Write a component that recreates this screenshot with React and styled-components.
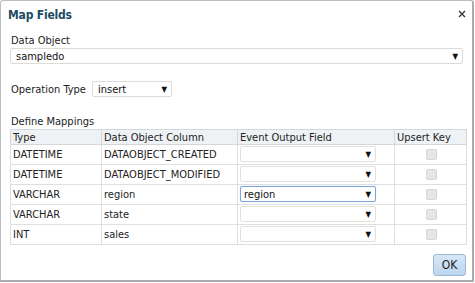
import React from "react";
import styled, { createGlobalStyle } from "styled-components";

const GlobalStyle = createGlobalStyle`
  html, body {
    margin: 0;
    padding: 0;
    background: #ffffff;
  }
  body {
    font-family: "DejaVu Sans Condensed", "DejaVu Sans", sans-serif;
    font-size: 11px;
    color: #222;
  }
`;

const mappings = [
  { type: "DATETIME", column: "DATAOBJECT_CREATED", field: "" },
  { type: "DATETIME", column: "DATAOBJECT_MODIFIED", field: "" },
  { type: "VARCHAR", column: "region", field: "region", focused: true },
  { type: "VARCHAR", column: "state", field: "" },
  { type: "INT", column: "sales", field: "" },
];

const App = () => {
  return (
    <>
      <GlobalStyle />
      <Dialog>
        <TitleBar>
          <Title>Map Fields</Title>
          <Close viewBox="0 0 8 8" width="8" height="8">
            <path d="M1 1 L7 7 M7 1 L1 7" stroke="#333" strokeWidth="1.3" />
          </Close>
        </TitleBar>
        <Body>
          <Label>Data Object</Label>
          <Select $width="453px">
            <span>sampledo</span>
            <Arrow>▼</Arrow>
          </Select>
          <OperationRow>
            <Label>Operation Type</Label>
            <Select $width="80px">
              <span>insert</span>
              <Arrow>▼</Arrow>
            </Select>
          </OperationRow>
          <SectionLabel>Define Mappings</SectionLabel>
          <Table>
            <colgroup>
              <col style={{ width: 91 }} />
              <col style={{ width: 136 }} />
              <col style={{ width: 157 }} />
              <col style={{ width: 72 }} />
            </colgroup>
            <thead>
              <tr>
                <Th>Type</Th>
                <Th>Data Object Column</Th>
                <Th>Event Output Field</Th>
                <Th>Upsert Key</Th>
              </tr>
            </thead>
            <tbody>
              {mappings.map((m) => (
                <tr key={m.column}>
                  <Td>{m.type}</Td>
                  <Td>{m.column}</Td>
                  <Td>
                    <CellSelect $focused={m.focused}>
                      <span>{m.field}</span>
                      <Arrow>▼</Arrow>
                    </CellSelect>
                  </Td>
                  <Td $center>
                    <Check />
                  </Td>
                </tr>
              ))}
            </tbody>
          </Table>
        </Body>
        <Footer>
          <OkButton>OK</OkButton>
        </Footer>
      </Dialog>
    </>
  );
};

export default App;

const Dialog = styled.div`
  width: 471px;
  height: 279px;
  border: 1px solid #b9bcc0;
  border-right: 2px solid #a9acb0;
  border-bottom: 2px solid #a9acb0;
  border-radius: 3px 3px 0 0;
  background: #fff;
  display: flex;
  flex-direction: column;
  box-sizing: content-box;
`;

const TitleBar = styled.div`
  height: 27px;
  display: flex;
  align-items: center;
  justify-content: space-between;
  padding: 0 6px 0 7px;
`;

const Title = styled.div`
  font-weight: bold;
  font-size: 12px;
  letter-spacing: -0.2px;
  color: #1d4b63;
`;

const Close = styled.svg`
  display: block;
  margin-top: -1px;
`;

const Body = styled.div`
  padding: 6px 0 0 9px;
  display: flex;
  flex-direction: column;
`;

const Label = styled.div`
  color: #222;
  line-height: 13px;
  margin-left: 1px;
`;

const Select = styled.div`
  width: ${(p) => p.$width};
  height: 16px;
  box-sizing: border-box;
  margin-top: 1px;
  border: 1px solid #dcdcd4;
  border-radius: 2px;
  display: flex;
  align-items: center;
  justify-content: space-between;
  padding: 0 4px 0 5px;
  color: #111;
`;

const Arrow = styled.span`
  font-size: 8px;
  color: #111;
`;

const OperationRow = styled.div`
  display: flex;
  align-items: center;
  gap: 6px;
  margin-top: 17px;

  ${Select} {
    margin-top: 0;
  }
`;

const SectionLabel = styled(Label)`
  margin-top: 18px;
`;

const Table = styled.table`
  width: 456px;
  table-layout: fixed;
  border-collapse: collapse;
  border: 1px solid #d3d7da;
  margin-top: 1px;
`;

const Th = styled.th`
  height: 14px;
  padding: 0 0 0 2px;
  text-align: left;
  font-weight: normal;
  background: #eef2f5;
  border: 1px solid #d3d7da;
  color: #222;
  line-height: 13px;
`;

const Td = styled.td`
  height: 18px;
  padding: 0 0 1px 2px;
  border: 1px solid #dde0e2;
  color: #222;
  line-height: 13px;
  white-space: nowrap;
  text-align: ${(p) => (p.$center ? "center" : "left")};
`;

const CellSelect = styled.div`
  width: 136px;
  height: 16px;
  box-sizing: border-box;
  border: 1px solid ${(p) => (p.$focused ? "#7fa6d8" : "#e2e2dc")};
  box-shadow: ${(p) => (p.$focused ? "0 0 1px #a8c6ee" : "none")};
  border-radius: 2px;
  display: flex;
  align-items: center;
  justify-content: space-between;
  padding: 0 4px 0 3px;
  color: #111;
`;

const Check = styled.div`
  width: 11px;
  height: 11px;
  margin: 0 auto;
  border: 1px solid #d6d6d6;
  border-radius: 2px;
  background: #e6e6e6;
  box-sizing: border-box;
`;

const Footer = styled.div`
  margin-top: auto;
  display: flex;
  justify-content: flex-end;
  padding: 0 6px 4px 0;
`;

const OkButton = styled.button`
  width: 33px;
  height: 22px;
  font-family: "DejaVu Sans Condensed", "DejaVu Sans", sans-serif;
  font-size: 12px;
  color: #222;
  border: 1px solid #9fb8d2;
  border-radius: 3px;
  background: linear-gradient(#d6e7f8, #bcd6ef);
  padding: 0;
`;
